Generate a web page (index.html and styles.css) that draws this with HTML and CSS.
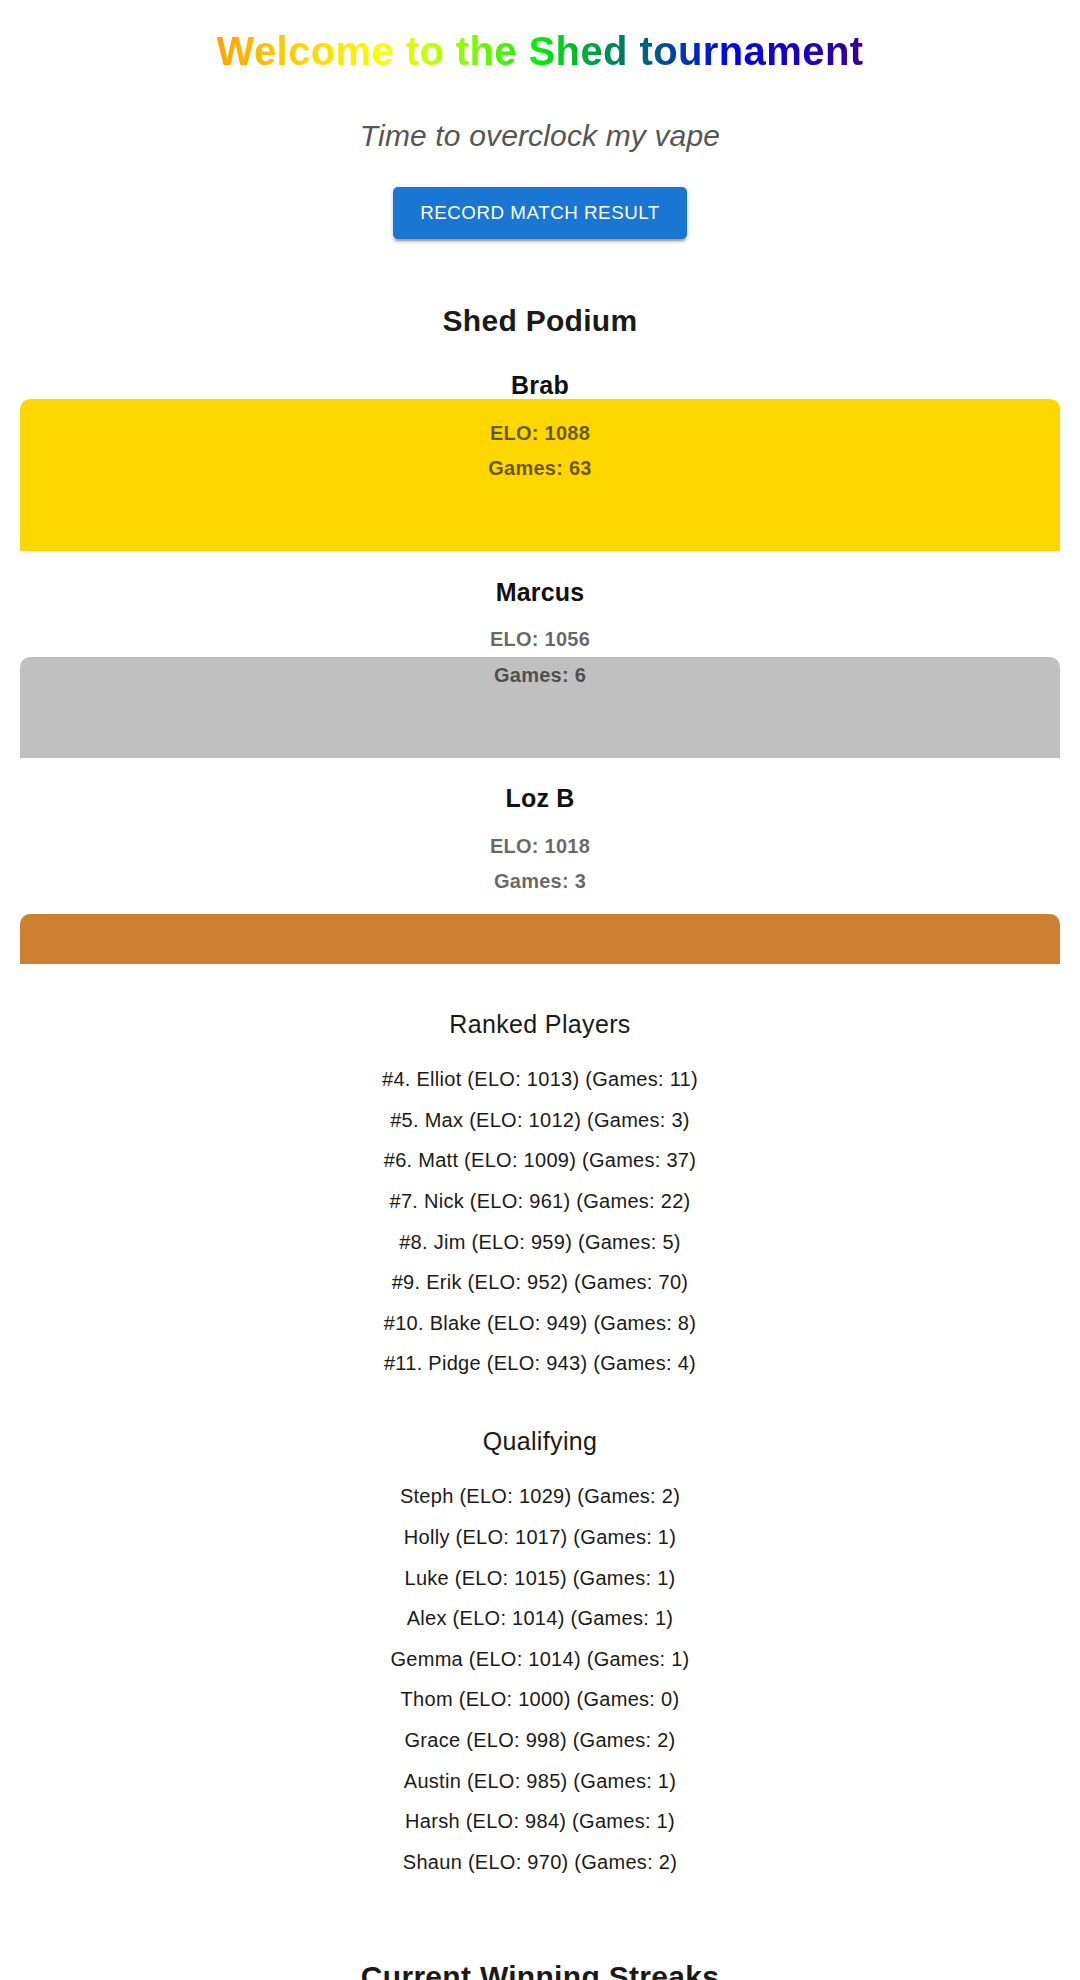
FILE: index.html
```html
<!DOCTYPE html>
<html lang="en">
<head>
<meta charset="utf-8">
<title>Shed tournament</title>
<link rel="stylesheet" href="styles.css">
</head>
<body>
<main class="page">
  <header class="hero">
    <h1 class="title">Welcome to the Shed tournament</h1>
    <p class="subtitle">Time to overclock my vape</p>
    <div class="actions">
      <button class="btn-primary" type="button">Record match result</button>
    </div>
  </header>

  <section class="podium">
    <h2 class="section-title">Shed Podium</h2>
    <div class="podium-list">
      <div class="podium-item">
        <h3 class="podium-name">Brab</h3>
        <div class="stage">
          <div class="stats">
            <p class="stat">ELO: 1088</p>
            <p class="stat">Games: 63</p>
          </div>
          <div class="bar bar-gold"></div>
        </div>
      </div>
      <div class="podium-item">
        <h3 class="podium-name">Marcus</h3>
        <div class="stage">
          <div class="stats">
            <p class="stat">ELO: 1056</p>
            <p class="stat">Games: 6</p>
          </div>
          <div class="bar bar-silver"></div>
        </div>
      </div>
      <div class="podium-item">
        <h3 class="podium-name">Loz B</h3>
        <div class="stage">
          <div class="stats">
            <p class="stat">ELO: 1018</p>
            <p class="stat">Games: 3</p>
          </div>
          <div class="bar bar-bronze"></div>
        </div>
      </div>
    </div>
  </section>

  <section class="ranked">
    <h4 class="list-title">Ranked Players</h4>
    <ul class="player-list">
      <li>#4. Elliot (ELO: 1013) (Games: 11)</li>
      <li>#5. Max (ELO: 1012) (Games: 3)</li>
      <li>#6. Matt (ELO: 1009) (Games: 37)</li>
      <li>#7. Nick (ELO: 961) (Games: 22)</li>
      <li>#8. Jim (ELO: 959) (Games: 5)</li>
      <li>#9. Erik (ELO: 952) (Games: 70)</li>
      <li>#10. Blake (ELO: 949) (Games: 8)</li>
      <li>#11. Pidge (ELO: 943) (Games: 4)</li>
    </ul>
  </section>

  <section class="qualifying">
    <h4 class="list-title">Qualifying</h4>
    <ul class="player-list">
      <li>Steph (ELO: 1029) (Games: 2)</li>
      <li>Holly (ELO: 1017) (Games: 1)</li>
      <li>Luke (ELO: 1015) (Games: 1)</li>
      <li>Alex (ELO: 1014) (Games: 1)</li>
      <li>Gemma (ELO: 1014) (Games: 1)</li>
      <li>Thom (ELO: 1000) (Games: 0)</li>
      <li>Grace (ELO: 998) (Games: 2)</li>
      <li>Austin (ELO: 985) (Games: 1)</li>
      <li>Harsh (ELO: 984) (Games: 1)</li>
      <li>Shaun (ELO: 970) (Games: 2)</li>
    </ul>
  </section>

  <section class="streaks">
    <h2 class="section-title">Current Winning Streaks</h2>
  </section>
</main>
</body>
</html>
```

FILE: styles.css
```css
html, body {
  margin: 0;
  padding: 0;
  background: #ffffff;
}

body {
  font-family: "Liberation Sans", Arial, Helvetica, sans-serif;
  color: rgba(0, 0, 0, 0.87);
}

.page {
  padding: 0 20px;
  text-align: center;
}

.hero {
  display: flex;
  flex-direction: column;
  align-items: center;
}

.title {
  margin: 27px 0 0;
  font-size: 40px;
  line-height: 48px;
  font-weight: 700;
  letter-spacing: 0.4px;
  background: linear-gradient(90deg, #ffa500 0%, #ffff00 26%, #a8ff00 36%, #00ee00 50%, #008060 62%, #0000ee 80%, #3a0090 100%);
  -webkit-background-clip: text;
  background-clip: text;
  color: transparent;
}

.subtitle {
  margin: 42.5px 0 0;
  font-size: 30px;
  line-height: 35px;
  font-style: italic;
  letter-spacing: 0.15px;
  color: #555555;
}

.actions {
  margin-top: 34.5px;
  display: flex;
  justify-content: center;
}

.btn-primary {
  display: inline-flex;
  align-items: center;
  justify-content: center;
  height: 52px;
  padding: 0 27.5px;
  border: 0;
  border-radius: 5px;
  background: #1976d2;
  color: #ffffff;
  font-family: "Liberation Sans", Arial, sans-serif;
  font-size: 18.75px;
  font-weight: 400;
  letter-spacing: 0.02857em;
  text-transform: uppercase;
  box-shadow: 0 4px 1.5px -2.5px rgba(0, 0, 0, 0.2), 0 2.5px 2.5px 0 rgba(0, 0, 0, 0.14), 0 1.25px 6.25px 0 rgba(0, 0, 0, 0.12);
  cursor: pointer;
}

.section-title {
  margin: 0;
  font-size: 30px;
  line-height: 35px;
  font-weight: 700;
  letter-spacing: 0.3px;
  color: #1a1a1a;
}

.podium {
  margin-top: 63.5px;
}

.podium-list {
  margin-top: 33.5px;
  display: flex;
  flex-direction: column;
  gap: 26.5px;
}

.podium-item {
  display: flex;
  flex-direction: column;
}

.podium-name {
  margin: 0;
  font-size: 25px;
  line-height: 28px;
  font-weight: 700;
  letter-spacing: 0.2px;
  color: #111111;
}

.stage {
  display: grid;
  height: 152px;
}

.stats,
.bar {
  grid-area: 1 / 1;
}

.stats {
  position: relative;
  z-index: 1;
  align-self: start;
  padding-top: 22.5px;
  display: flex;
  flex-direction: column;
  gap: 12.5px;
}

.stat {
  margin: 0;
  font-size: 20px;
  line-height: 23px;
  font-weight: 700;
  letter-spacing: 0.25px;
  color: rgba(0, 0, 0, 0.6);
}

.bar {
  align-self: end;
  border-radius: 10px 10px 0 0;
}

.bar-gold {
  height: 152px;
  background: #ffd700;
}

.bar-silver {
  height: 101px;
  background: #c0c0c0;
}

.bar-bronze {
  height: 50px;
  background: #cd7f32;
}

.ranked {
  margin-top: 45px;
}

.qualifying {
  margin-top: 42px;
}

.list-title {
  margin: 0;
  font-size: 25px;
  line-height: 30px;
  font-weight: 400;
  letter-spacing: 0.35px;
  color: #1a1a1a;
}

.player-list {
  list-style: none;
  margin: 20.3px 0 0;
  padding: 0;
}

.player-list li {
  font-size: 20px;
  line-height: 40.6px;
  letter-spacing: 0.28px;
  color: #1a1a1a;
}

.streaks {
  margin-top: 77px;
}
```
